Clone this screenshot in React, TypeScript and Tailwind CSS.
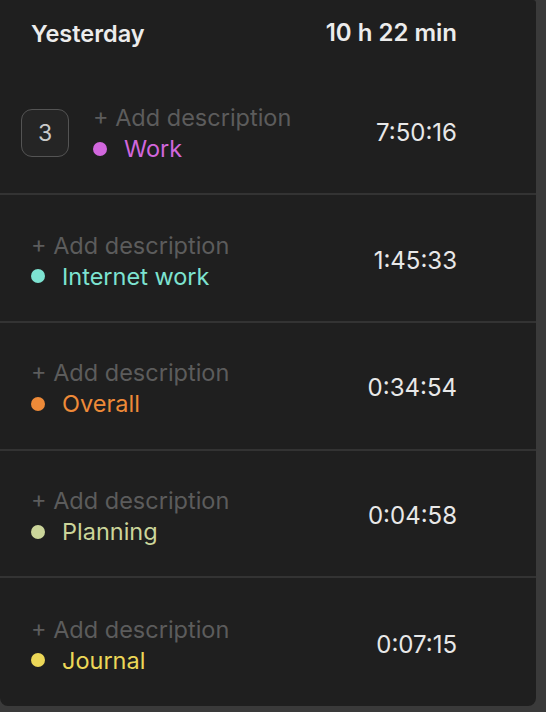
import React from "react";

type Entry = { tag: string; color: string; time: string; count?: number };

const entries: Entry[] = [
  { tag: "Work", color: "#d167dd", time: "7:50:16", count: 3 },
  { tag: "Internet work", color: "#7de3d1", time: "1:45:33" },
  { tag: "Overall", color: "#ee8a38", time: "0:34:54" },
  { tag: "Planning", color: "#cbd59a", time: "0:04:58" },
  { tag: "Journal", color: "#ecd757", time: "0:07:15" },
];

export default function App() {
  return (
    <div
      className="w-[546px] h-[712px] bg-[#3a3a3a] overflow-hidden"
      style={{ fontFamily: "Inter, 'Noto Sans', sans-serif" }}
    >
      <div className="w-[536px] h-[706px] bg-[#1f1f1f] rounded-b-[8px] rounded-tr-[3px] flex flex-col">
        <div className="h-[68px] flex items-center justify-between pl-[31px] pr-[79px] pb-[1px]">
          <span className="text-[23.5px] font-semibold text-[#ececec]">Yesterday</span>
          <span className="text-[24px] font-semibold text-[#ececec]">10 h 22 min</span>
        </div>
        {entries.map((e, i) => (
          <div
            key={i}
            className={`h-[128px] flex items-center pr-[79px] pt-[5px] ${
              i < entries.length - 1 ? "border-b-2 border-[#333333]" : ""
            } ${e.count ? "pl-[21px]" : "pl-[31px]"}`}
          >
            {e.count ? (
              <div className="w-[48px] h-[48px] rounded-[11px] border-[1.5px] border-[#545454] bg-[#252525] flex items-center justify-center text-[23px] text-[#c9c9c9] mr-[24px]">
                {e.count}
              </div>
            ) : null}
            <div className="flex flex-col flex-1">
              <span className="text-[23.5px] leading-[31px] text-[#5c5c5c]">+ Add description</span>
              <div className="flex items-center leading-[31px]">
                <span className="w-[14px] h-[14px] rounded-full mr-[17px]" style={{ background: e.color }} />
                <span className="text-[23.5px]" style={{ color: e.color }}>
                  {e.tag}
                </span>
              </div>
            </div>
            <span className="text-[24px] text-[#e8e8e8]">{e.time}</span>
          </div>
        ))}
      </div>
    </div>
  );
}
